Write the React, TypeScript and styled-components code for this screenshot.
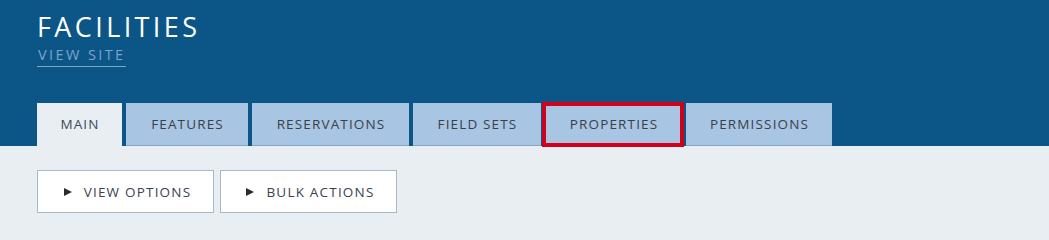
import React from "react";
import styled, { createGlobalStyle } from "styled-components";

const Global = createGlobalStyle`
  html, body { margin: 0; padding: 0; }
  body { background: #e9eef3; font-family: "Open Sans", Lato, sans-serif; }
`;

const Header = styled.header`
  background: #0b5587;
  height: 146px;
  padding: 0 37px;
  box-sizing: border-box;
  display: flex;
  flex-direction: column;
`;

const Title = styled.h1`
  margin: 11px 0 0 0;
  font-size: 27px;
  line-height: 32px;
  font-weight: 400;
  color: #ffffff;
  letter-spacing: 3.4px;
`;

const SiteLink = styled.a`
  align-self: flex-start;
  margin-top: 3px;
  color: #7fa4c9;
  font-size: 14.5px;
  line-height: 18px;
  letter-spacing: 2.4px;
  text-decoration: none;
  padding: 0 0 2px 1px;
  border-bottom: 1px solid #7fa4c9;
`;

const Tabs = styled.nav`
  margin-top: auto;
  display: flex;
  gap: 4px;
  height: 43px;
`;

const Tab = styled.div<{ $active?: boolean; $w: number }>`
  position: relative;
  display: flex;
  align-items: center;
  justify-content: center;
  box-sizing: border-box;
  width: ${(p) => p.$w}px;
  padding-left: 1px;
  font-size: 13.5px;
  letter-spacing: 1.15px;
  color: ${(p) => (p.$active ? "#3d4b5c" : "#3b3f48")};
  background: ${(p) => (p.$active ? "#e9eef3" : "#a8c5e3")};
  border-bottom: 1px solid ${(p) => (p.$active ? "#e9eef3" : "#86a6c6")};
`;

const Highlight = styled.span`
  position: absolute;
  top: -1px;
  left: -3px;
  right: -2px;
  bottom: -2px;
  border: 4px solid #d0021b;
  pointer-events: none;
`;

const Body = styled.main`
  padding: 24px 37px 0;
  display: flex;
  gap: 6px;
`;

const Button = styled.button`
  width: 177px;
  height: 43px;
  box-sizing: border-box;
  background: #ffffff;
  border: 1px solid #a9b8c9;
  display: flex;
  align-items: center;
  justify-content: center;
  gap: 12px;
  font-family: inherit;
  font-size: 13.5px;
  letter-spacing: 1.2px;
  color: #3b4250;
  padding: 0 0 0 4px;
  cursor: pointer;
`;

const Arrow = styled.span`
  width: 0;
  height: 0;
  border-top: 4px solid transparent;
  border-bottom: 4px solid transparent;
  border-left: 8px solid #2b2b2b;
`;

const tabs: { label: string; w: number }[] = [
  { label: "MAIN", w: 85 },
  { label: "FEATURES", w: 122 },
  { label: "RESERVATIONS", w: 157 },
  { label: "FIELD SETS", w: 128 },
  { label: "PROPERTIES", w: 137 },
  { label: "PERMISSIONS", w: 146 },
];

export default function App() {
  return (
    <>
      <Global />
      <Header>
        <Title>FACILITIES</Title>
        <SiteLink href="#">VIEW SITE</SiteLink>
        <Tabs>
          {tabs.map((t) => (
            <Tab key={t.label} $w={t.w} $active={t.label === "MAIN"}>
              {t.label}
              {t.label === "PROPERTIES" && <Highlight />}
            </Tab>
          ))}
        </Tabs>
      </Header>
      <Body>
        <Button>
          <Arrow />
          VIEW OPTIONS
        </Button>
        <Button>
          <Arrow />
          BULK ACTIONS
        </Button>
      </Body>
    </>
  );
}
